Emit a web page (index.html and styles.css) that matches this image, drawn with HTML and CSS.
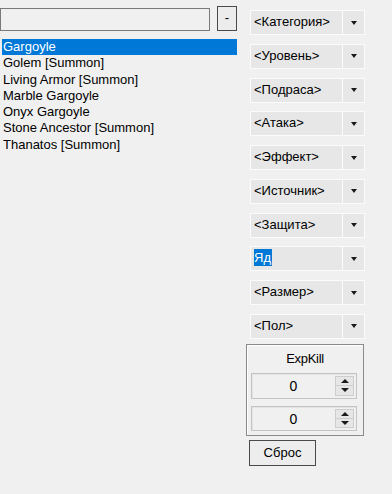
FILE: index.html
```html
<!DOCTYPE html>
<html lang="ru">
<head>
  <meta charset="UTF-8" />
  <title>Монстры</title>
  <link rel="stylesheet" href="styles.css">
</head>
<body>
  <div class="app">
    <div class="left">
      <div class="search-row">
        <input type="text" class="search" />
        <button class="minus">-</button>
      </div>
      <ul class="list">
        <li class="selected">Gargoyle</li>
        <li>Golem [Summon]</li>
        <li>Living Armor [Summon]</li>
        <li>Marble Gargoyle</li>
        <li>Onyx Gargoyle</li>
        <li>Stone Ancestor [Summon]</li>
        <li>Thanatos [Summon]</li>
      </ul>
    </div>
    <div class="right">
      <div class="combo"><span class="val">&lt;Категория&gt;</span><span class="drop"></span></div>
      <div class="combo"><span class="val">&lt;Уровень&gt;</span><span class="drop"></span></div>
      <div class="combo"><span class="val">&lt;Подраса&gt;</span><span class="drop"></span></div>
      <div class="combo"><span class="val">&lt;Атака&gt;</span><span class="drop"></span></div>
      <div class="combo"><span class="val">&lt;Эффект&gt;</span><span class="drop"></span></div>
      <div class="combo"><span class="val">&lt;Источник&gt;</span><span class="drop"></span></div>
      <div class="combo"><span class="val">&lt;Защита&gt;</span><span class="drop"></span></div>
      <div class="combo"><span class="val"><span class="hl">Яд</span></span><span class="drop"></span></div>
      <div class="combo"><span class="val">&lt;Размер&gt;</span><span class="drop"></span></div>
      <div class="combo"><span class="val">&lt;Пол&gt;</span><span class="drop"></span></div>

      <div class="group">
        <div class="group-title">ExpKill</div>
        <div class="num">
          <span class="num-val">0</span>
          <span class="spin"><span class="up"></span><span class="down"></span></span>
        </div>
        <div class="num">
          <span class="num-val">0</span>
          <span class="spin"><span class="up"></span><span class="down"></span></span>
        </div>
      </div>
      <button class="reset">Сброс</button>
    </div>
  </div>
</body>
</html>
```

FILE: styles.css
```css
body {
  margin: 0;
  background: #f0f0f0;
  font-family: "Liberation Sans", Arial, sans-serif;
  font-size: 13px;
  color: #000;
}
.app {
  display: flex;
  width: 392px;
  height: 494px;
}
.left {
  width: 237px;
  padding-top: 6px;
}
.search-row {
  display: flex;
  align-items: flex-end;
  justify-content: space-between;
  height: 25px;
}
.search {
  width: 210px;
  height: 23px;
  box-sizing: border-box;
  border: 1px solid #7a7a7a;
  background: #f0f0f0;
  margin: 0;
  padding: 0;
}
.minus {
  width: 20px;
  height: 25px;
  box-sizing: border-box;
  border: 1px solid #4a4a4a;
  background: #ececec;
  padding: 0 0 3px;
  font-family: "Liberation Sans", Arial, sans-serif;
  font-size: 13px;
  line-height: 1;
}
.list {
  list-style: none;
  margin: 8px 0 0 2px;
  padding: 0;
}
.list li {
  height: 16.3px;
  line-height: 16px;
  padding-left: 1px;
  white-space: nowrap;
}
.list li.selected {
  background: #0078d7;
  color: #fff;
}
.right {
  margin-left: 9px;
  padding-top: 10px;
  display: flex;
  flex-direction: column;
  width: 119px;
}
.combo {
  display: flex;
  height: 25px;
  width: 115px;
  box-sizing: border-box;
  margin-left: 4px;
  margin-bottom: 8.78px;
  border: 1px solid #fbfbfb;
  background: #e7e7e7;
}
.combo .val {
  flex: 1;
  padding-left: 3px;
  line-height: 22px;
  white-space: nowrap;
  overflow: hidden;
}
.combo .hl {
  background: #0078d7;
  color: #fff;
  padding: 1px 1px 1px 0;
}
.combo .drop {
  width: 21px;
  border-left: 1px solid #fbfbfb;
  display: flex;
  align-items: center;
  justify-content: center;
}
.combo .drop::after {
  content: "";
  border-left: 3.5px solid transparent;
  border-right: 3.5px solid transparent;
  border-top: 4px solid #1a1a1a;
}
.group {
  margin-top: -4px;
  width: 118px;
  height: 92px;
  box-sizing: border-box;
  border: 1px solid #8a8a8a;
  box-shadow: inset 1px 1px 0 #fff;
  padding: 0 6px 0 4px;
}
.group-title {
  text-align: center;
  line-height: 16px;
  margin-top: 6px;
  margin-bottom: 6px;
  padding-left: 2px;
  letter-spacing: -0.3px;
}
.num {
  display: flex;
  height: 26px;
  box-sizing: border-box;
  border: 1px solid #c4c4c4;
  box-shadow: inset 1px 1px 0 #e4e4e4;
  background: #f0f0f0;
  margin-bottom: 7px;
  padding: 2px 2px 2px 0;
}
.num:last-child {
  height: 25px;
}
.num-val {
  flex: 1;
  text-align: center;
  line-height: 20px;
  font-size: 14px;
}
.spin {
  width: 17px;
  display: flex;
  flex-direction: column;
  border: 1px solid #cdcdcd;
  background: #e6e6e6;
}
.spin span {
  flex: 1;
  display: flex;
  align-items: center;
  justify-content: center;
}
.spin .up {
  border-bottom: 1px solid #cdcdcd;
}
.spin .up::after {
  content: "";
  border-left: 4px solid transparent;
  border-right: 4px solid transparent;
  border-bottom: 4px solid #1a1a1a;
}
.spin .down::after {
  content: "";
  border-left: 4px solid transparent;
  border-right: 4px solid transparent;
  border-top: 4px solid #1a1a1a;
}
.reset {
  margin-top: 4px;
  margin-left: 3px;
  width: 67px;
  height: 26px;
  box-sizing: border-box;
  border: 1px solid #4a4a4a;
  background: #ededed;
  font-family: "Liberation Sans", Arial, sans-serif;
  font-size: 13px;
  padding: 0;
  color: #000;
}
```
